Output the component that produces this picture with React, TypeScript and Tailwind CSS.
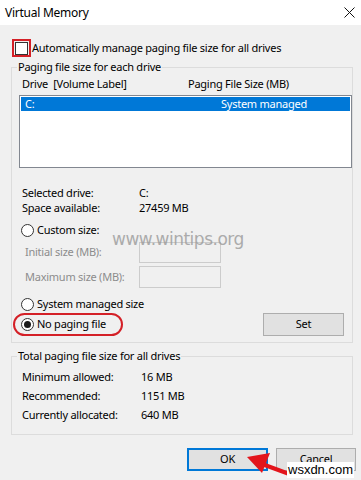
import React from "react";

const Radio: React.FC<{ checked?: boolean }> = ({ checked }) => (
  <span className="w-[13px] h-[13px] rounded-full border border-[#333333] bg-white flex items-center justify-center shrink-0">
    {checked && <span className="w-[7px] h-[7px] rounded-full bg-[#1a1a1a]" />}
  </span>
);

const Button: React.FC<{ label: string; primary?: boolean; className?: string }> = ({ label, primary, className }) => (
  <button
    className={
      "h-[23px] flex items-center justify-center bg-[#e1e1e1] text-black " +
      (primary ? "border-2 border-[#0078d7] " : "border border-[#adadad] ") +
      (className ?? "")
    }
  >
    {label}
  </button>
);

const App: React.FC = () => {
  return (
    <div className="relative w-[361px] h-[480px] overflow-hidden bg-[#f0f0f0] text-[11px] tracking-[-0.25px] text-black font-['Noto_Sans',sans-serif] select-none">
      {/* title bar */}
      <div className="h-[25px] bg-white flex items-center justify-between pl-[5px] pr-[6px]">
        <span className="text-[12px]">Virtual Memory</span>
        <svg width="11" height="11" viewBox="0 0 11 11" className="mb-[1px]">
          <path d="M0.5 0.5 L10.5 10.5 M10.5 0.5 L0.5 10.5" stroke="#111" strokeWidth="1" />
        </svg>
      </div>

      {/* auto manage checkbox */}
      <div className="mt-[14px] ml-[12px] h-[18px] flex items-center">
        <span className="w-[19px] h-[18px] border-2 border-[#d42027] flex items-center justify-center">
          <span className="w-[13px] h-[13px] border border-[#333333] bg-white" />
        </span>
        <span className="ml-px">Automatically manage paging file size for all drives</span>
      </div>

      {/* per-drive group */}
      <fieldset className="mt-[2px] ml-[11px] w-[342px] border border-[#dcdcdc] pb-[6px]">
        <legend className="ml-[5px] px-px leading-[16px]">Paging file size for each drive</legend>
        <div className="mt-px h-[16px] pl-[10px] flex items-center">
          <span className="w-[166px] whitespace-pre">Drive  [Volume Label]</span>
          <span>Paging File Size (MB)</span>
        </div>
        <div className="mt-[3px] ml-[7px] w-[333px] h-[73px] border border-[#828790] bg-white p-px">
          <div className="h-[14px] bg-[#0078d7] text-white flex items-center pl-[4px]">
            <span className="w-[196px]">C:</span>
            <span>System managed</span>
          </div>
        </div>

        <div className="mt-[18px] pl-[10px]">
          <div className="h-[15px] flex items-center">
            <span className="w-[117px]">Selected drive:</span>
            <span>C:</span>
          </div>
          <div className="h-[15px] flex items-center">
            <span className="w-[117px]">Space available:</span>
            <span>27459 MB</span>
          </div>
        </div>

        <div className="mt-[6px] pl-[9px] h-[16px] flex items-center gap-[3px]">
          <Radio />
          <span>Custom size:</span>
        </div>
        <div className="mt-[4px] pl-[13px] h-[21px] flex items-center text-[#8c8c8c]">
          <span className="w-[114px]">Initial size (MB):</span>
          <span className="w-[82px] h-[21px] border border-[#cccccc] bg-[#f0f0f0]" />
        </div>
        <div className="mt-[3px] pl-[13px] h-[22px] flex items-center text-[#8c8c8c]">
          <span className="w-[114px]">Maximum size (MB):</span>
          <span className="w-[82px] h-[22px] border border-[#cccccc] bg-[#f0f0f0]" />
        </div>

        <div className="mt-[8px] pl-[9px] h-[16px] flex items-center gap-[3px]">
          <Radio />
          <span>System managed size</span>
        </div>
        <div className="mt-px h-[23px] flex items-center justify-between">
          <span className="ml-px w-[110px] h-[23px] border-2 border-[#d42027] rounded-full flex items-center gap-[3px] pl-[6px]">
            <Radio checked />
            <span>No paging file</span>
          </span>
          <Button label="Set" className="w-[81px] mr-[8px]" />
        </div>
      </fieldset>

      {/* totals group */}
      <fieldset className="mt-[5px] ml-[11px] w-[342px] border border-[#dcdcdc] pb-[9px]">
        <legend className="ml-[5px] px-px leading-[16px]">Total paging file size for all drives</legend>
        <div className="mt-[4px] pl-[10px]">
          {[
            ["Minimum allowed:", "16 MB"],
            ["Recommended:", "1151 MB"],
            ["Currently allocated:", "640 MB"],
          ].map(([k, v]) => (
            <div key={k} className="h-[19px] flex items-center">
              <span className="w-[119px]">{k}</span>
              <span>{v}</span>
            </div>
          ))}
        </div>
      </fieldset>

      {/* dialog buttons */}
      <div className="mt-[13px] pr-[5px] flex justify-end gap-[8px]">
        <Button label="OK" primary className="w-[81px]" />
        <Button label="Cancel" className="w-[80px]" />
      </div>

      {/* overlays: watermarks and annotation arrow */}
      <span className="absolute left-[112px] top-[229px] text-[17px] leading-[20px] text-[#9b9b9b] opacity-80 font-['DejaVu_Sans',sans-serif] tracking-[-0.5px]">
        www.wintips.org
      </span>
      <svg className="absolute left-[240px] top-[448px]" width="60" height="32" viewBox="240 448 60 32">
        <path d="M262 464 L292 475" stroke="#e3151c" strokeWidth="4" strokeLinecap="round" />
        <path d="M247 457 L270 453 L262 473 Z" fill="#e3151c" />
      </svg>
      <span className="absolute left-[287px] top-[462px] bg-white px-px text-[13px] leading-[16px] tracking-normal font-['Liberation_Sans',sans-serif]">
        wsxdn.com
      </span>
    </div>
  );
};

export default App;
